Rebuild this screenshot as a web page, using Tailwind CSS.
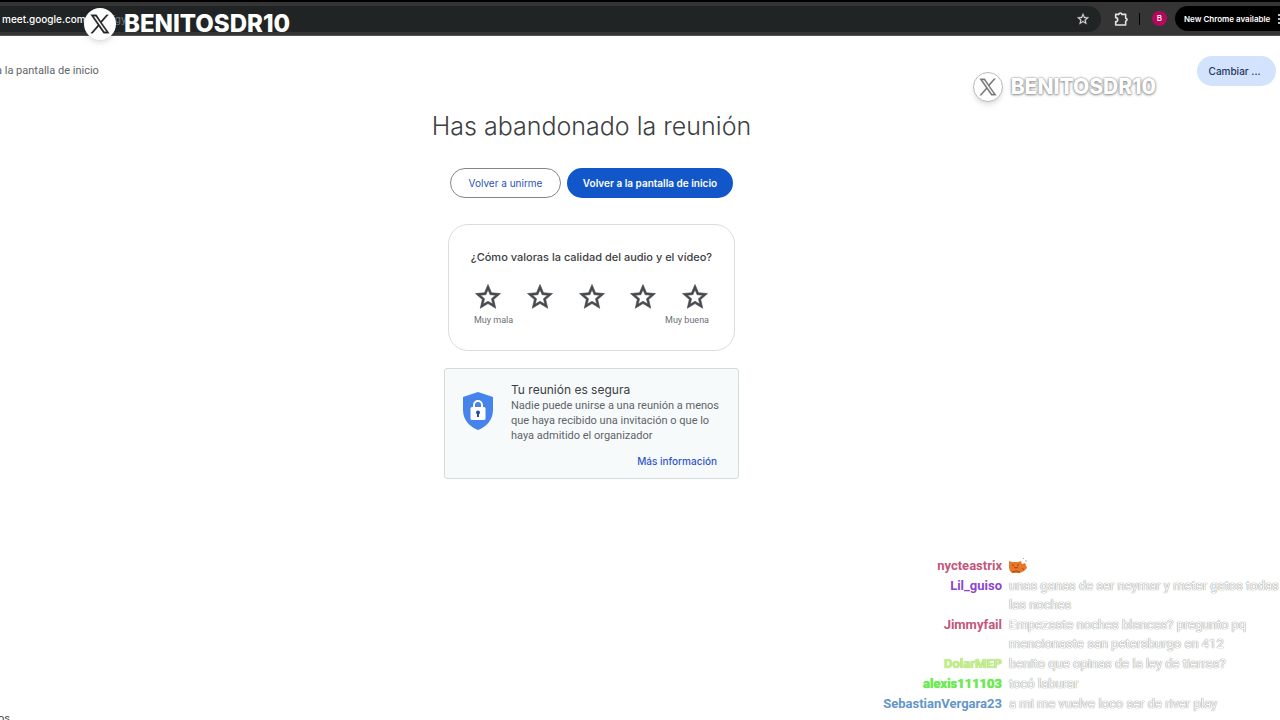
<!DOCTYPE html>
<html lang="es">
<head>
<meta charset="utf-8">
<meta name="viewport" content="width=device-width, initial-scale=1">
<title>Has abandonado la reunión</title>
<script src="https://cdn.jsdelivr.net/npm/@tailwindcss/browser@4"></script>
</head>
<body class="relative flex min-h-screen flex-col overflow-x-hidden bg-white font-[Roboto,sans-serif] text-[#3c4043]">
<svg class="hidden" aria-hidden="true">
  <symbol id="star" viewBox="0 0 24 24"><path fill="currentColor" stroke="currentColor" stroke-width=".5" d="M22 9.24l-7.19-.62L12 2 9.19 8.63 2 9.24l5.46 4.73L5.82 21 12 17.27 18.18 21l-1.63-7.03L22 9.24zM12 15.4l-3.76 2.27 1-4.28-3.32-2.88 4.38-.38L12 6.1l1.71 4.04 4.38.38-3.32 2.88 1 4.28L12 15.4z"/></symbol>
  <symbol id="x" viewBox="0 0 24 24"><path fill="currentColor" stroke="currentColor" stroke-width=".5" fill-rule="evenodd" d="M13.900 10.200 22 1h-2.200l-6.900 7.800L7.800 1H1l8.500 12.300L1 23h2.200l7.300-8.400 5.800 8.400H23zM4.200 2.700h2.700l13 18.700h-2.700z"/></symbol>
</svg>

<header class="flex h-9 items-center border-t-2 border-b border-t-black border-b-[#555] bg-[#353535] font-[Inter,sans-serif] text-white">
  <div class="flex h-[26px] min-w-0 flex-1 items-center justify-between rounded-r-full bg-[#202424] pr-[11px] pl-[2px]">
    <span class="text-[10px] leading-4 font-medium">meet.google.com<span class="font-normal text-[#777]">/qdy-fgy</span></span>
    <button type="button" aria-label="Añadir a marcadores"><svg class="size-[14px] text-[#d5d5d5]"><use href="#star"/></svg></button>
  </div>
  <button type="button" aria-label="Extensiones" class="ml-3"><svg class="size-4" viewBox="0 0 24 24" fill="none" stroke="#e3e3e3" stroke-width="2.400" stroke-linejoin="round"><path d="M4 5h5a2 2 0 1 1 4 0h6v6a2 2 0 1 1 0 4v6H4v-5a3 3 0 0 0 0-6z"/></svg></button>
  <span class="ml-[10px] h-3 w-px bg-black"></span>
  <button type="button" aria-label="Perfil" class="ml-3 size-[15px] rounded-full bg-[#b5085a] text-[8px] leading-[15px] font-medium">B</button>
  <button type="button" class="ml-2 flex h-[25px] w-[105px] items-center justify-between rounded-l-full bg-black pl-[9px] text-[8px] font-semibold whitespace-nowrap">New Chrome available
    <svg class="-mr-[2px] h-3 w-1" viewBox="0 0 4 12" fill="#fff"><circle cx="1" cy="2" r="1"/><circle cx="1" cy="6" r="1"/><circle cx="1" cy="10" r="1"/></svg></button>
</header>

<div class="flex items-start justify-between pt-5 pr-1">
  <p class="-ml-1 pt-[7px] text-[11px] leading-4 text-[#5f6368]">a la pantalla de inicio</p>
  <button type="button" class="h-[30px] w-[79px] rounded-full bg-[#d3e3fd] pr-1 font-[Inter,sans-serif] text-[10px] font-medium text-[#1f3760]">Cambiar ...</button>
</div>

<main class="flex flex-col items-center pt-[22px] pr-[97px]">
  <h1 class="font-[Inter,sans-serif] text-[25px] leading-9 font-light">Has abandonado la reunión</h1>
  <div class="mt-6 flex gap-[6px] font-[Inter,sans-serif] text-[10px]">
    <button type="button" class="h-[30px] w-[111px] rounded-full border border-[#80868b] text-[#2a55b5]">Volver a unirme</button>
    <button type="button" class="h-[30px] w-[166px] rounded-full bg-[#1257c9] font-semibold text-white">Volver a la pantalla de inicio</button>
  </div>

  <fieldset aria-labelledby="q" class="mt-[26px] w-[287px] rounded-[20px] border border-[#dadce0] pt-6 pb-[22px]">
    <p id="q" class="text-center font-[Inter,sans-serif] text-[11px] leading-4 font-medium text-[#3c4043]">¿Cómo valoras la calidad del audio y el vídeo?</p>
    <div class="mx-6 mt-[17px] flex justify-between text-[#47494d]">
      <label><input class="sr-only" type="radio" name="r" aria-label="1 estrella"><svg class="size-[30px]"><use href="#star"/></svg></label>
      <label><input class="sr-only" type="radio" name="r" aria-label="2 estrellas"><svg class="size-[30px]"><use href="#star"/></svg></label>
      <label><input class="sr-only" type="radio" name="r" aria-label="3 estrellas"><svg class="size-[30px]"><use href="#star"/></svg></label>
      <label><input class="sr-only" type="radio" name="r" aria-label="4 estrellas"><svg class="size-[30px]"><use href="#star"/></svg></label>
      <label><input class="sr-only" type="radio" name="r" aria-label="5 estrellas"><svg class="size-[30px]"><use href="#star"/></svg></label>
    </div>
    <div class="mx-[25px] flex justify-between text-[9px] leading-4 text-[#6b6f73]"><span>Muy mala</span><span>Muy buena</span></div>
  </fieldset>

  <section class="mt-[17px] flex w-[295px] gap-[17px] rounded-[3px] border border-[#d5dadc] bg-[#f6fafb] pt-3 pr-[21px] pb-[9px] pl-[17px]">
    <svg class="mt-[10px] h-10 w-8 shrink-0" viewBox="0 0 32 40">
      <path fill="#4683ea" d="M16 1l15 5v13c0 10-7 17-15 20C8 36 1 29 1 19V6z"/>
      <path fill="none" stroke="#fff" stroke-width="2" d="M12 17v-3a4 4 0 0 1 8 0v3"/>
      <rect x="8.500" y="16" width="15" height="13" rx="1.500" fill="#fff"/>
      <circle cx="16" cy="21.500" r="2" fill="#234e9d"/><path fill="#234e9d" d="M15 22h2v4h-2z"/>
    </svg>
    <div class="flex min-w-0 flex-1 flex-col">
      <h2 class="font-[Inter,sans-serif] text-[12px] leading-[17px]">Tu reunión es segura</h2>
      <p class="text-[11px] leading-[15px] whitespace-nowrap text-[#5f6368]">Nadie puede unirse a una reunión a menos<br>que haya recibido una invitación o que lo<br>haya admitido el organizador</p>
      <a href="#" class="mt-[10px] self-end font-[Inter,sans-serif] text-[10px] leading-4 font-medium text-[#3056ca]">Más información</a>
    </div>
  </section>
</main>
<footer class="mt-auto h-[9px] overflow-hidden text-[11px] leading-4 text-[#444]"><span class="-ml-2">nos</span></footer>

<div class="absolute top-2 left-[84px] flex items-center gap-2">
  <span class="grid size-8 place-items-center rounded-full bg-white text-[#222] shadow-md"><svg class="size-5"><use href="#x"/></svg></span>
  <span class="font-[Inter,sans-serif] text-[24px] leading-8 font-extrabold text-white">BENITOSDR10</span>
</div>
<div class="absolute top-[72px] right-[124px] flex items-center gap-2">
  <span class="grid size-[30px] place-items-center rounded-full border border-[#bbb] bg-white text-[#777] shadow-md"><svg class="size-[18px]"><use href="#x"/></svg></span>
  <span class="font-[Inter,sans-serif] text-[21px] leading-7 font-extrabold text-white [text-shadow:0_0_2px_#777,0_1px_3px_#999]">BENITOSDR10</span>
</div>

<dl class="absolute right-0 bottom-[7px] grid grid-cols-[120px_271px] gap-x-[7px] gap-y-px text-[13px] leading-[19px] [&_dd]:text-white [&_dd]:[text-shadow:0_0_1px_#777,0_0_1px_#aaa] [&_dt]:text-right [&_dt]:font-bold">
  <dt class="text-[#c4567a]">nycteastrix</dt>
  <dd><svg class="h-[19px] w-5" viewBox="0 0 20 19" role="img" aria-label="gato"><path fill="#e8772a" d="M0 5l3 1h6l3-1 1 3 3-1 2 5-3 3-4 2H3l-2-2-1-3z"/><path fill="none" stroke="#8b3c12" stroke-width=".8" d="M3 9h2m3 0h2M5 11l2 1 2-1M3 16l4-1 4 1m2-4l2 2"/><path fill="none" stroke="#aaa" d="M14 3l1-1m2 4V4"/></svg></dd>
  <dt class="text-[#8d45cf]">Lil_guiso</dt><dd>unas ganas de ser neymar y meter gatos todas<br>las noches</dd>
  <dt class="text-[#c4567a]">Jimmyfail</dt><dd>Empezaste noches blancas? pregunto pq<br>mencionaste san petersburgo en 412</dd>
  <dt class="text-[#c5f08a] [text-shadow:0_0_1px_#80bd45]">DolarMEP</dt><dd>benito que opinas de la ley de tierras?</dd>
  <dt class="text-[#6bed4f] [text-shadow:0_0_1px_#55cc40]">alexis111103</dt><dd>tocó laburar</dd>
  <dt class="text-[#6496c8]">SebastianVergara23</dt><dd>a mi me vuelve loco ser de river play</dd>
</dl>
</body>
</html>
